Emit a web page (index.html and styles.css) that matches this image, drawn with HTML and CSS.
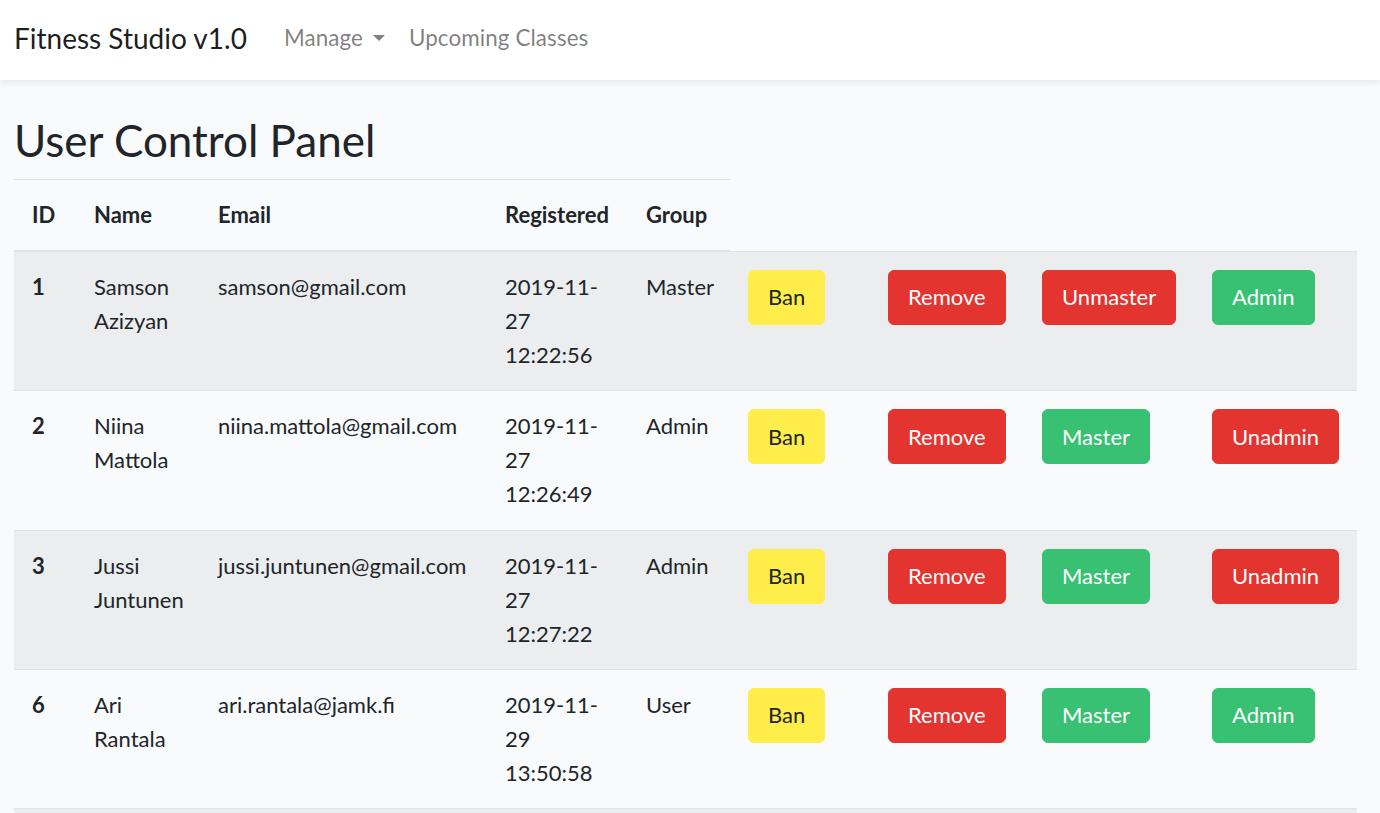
FILE: index.html
```html
<!DOCTYPE html>
<html lang="en">
<head>
<meta charset="utf-8">
<title>Fitness Studio v1.0</title>
<link rel="stylesheet" href="styles.css">
</head>
<body>
<nav class="navbar">
  <a class="brand" href="#">Fitness Studio v1.0</a>
  <ul class="nav">
    <li><a class="nav-link dropdown" href="#">Manage<span class="caret"></span></a></li>
    <li><a class="nav-link" href="#">Upcoming Classes</a></li>
  </ul>
</nav>
<main class="content">
  <h2 class="title">User Control Panel</h2>
  <table class="users">
    <colgroup>
      <col class="c-id"><col class="c-name"><col class="c-email"><col class="c-reg"><col class="c-group">
      <col class="c-ban"><col class="c-remove"><col class="c-master"><col class="c-admin">
    </colgroup>
    <thead>
      <tr><th>ID</th><th>Name</th><th>Email</th><th>Registered</th><th>Group</th></tr>
    </thead>
    <tbody>
      <tr class="odd">
        <th>1</th><td>Samson Azizyan</td><td>samson@gmail.com</td><td>2019-11-27 12:22:56</td><td>Master</td>
        <td><button class="btn btn-warning">Ban</button></td>
        <td><button class="btn btn-danger">Remove</button></td>
        <td><button class="btn btn-danger">Unmaster</button></td>
        <td><button class="btn btn-success">Admin</button></td>
      </tr>
      <tr>
        <th>2</th><td>Niina Mattola</td><td>niina.mattola@gmail.com</td><td>2019-11-27 12:26:49</td><td>Admin</td>
        <td><button class="btn btn-warning">Ban</button></td>
        <td><button class="btn btn-danger">Remove</button></td>
        <td><button class="btn btn-success">Master</button></td>
        <td><button class="btn btn-danger">Unadmin</button></td>
      </tr>
      <tr class="odd">
        <th>3</th><td>Jussi Juntunen</td><td>jussi.juntunen@gmail.com</td><td>2019-11-27 12:27:22</td><td>Admin</td>
        <td><button class="btn btn-warning">Ban</button></td>
        <td><button class="btn btn-danger">Remove</button></td>
        <td><button class="btn btn-success">Master</button></td>
        <td><button class="btn btn-danger">Unadmin</button></td>
      </tr>
      <tr>
        <th>6</th><td>Ari Rantala</td><td>ari.rantala@jamk.fi</td><td>2019-11-29 13:50:58</td><td>User</td>
        <td><button class="btn btn-warning">Ban</button></td>
        <td><button class="btn btn-danger">Remove</button></td>
        <td><button class="btn btn-success">Master</button></td>
        <td><button class="btn btn-success">Admin</button></td>
      </tr>
      <tr class="odd empty">
        <th></th><td></td><td></td><td></td><td></td>
        <td></td><td></td><td></td><td></td>
      </tr>
    </tbody>
  </table>
</main>
</body>
</html>
```

FILE: styles.css
```css
* { box-sizing: border-box; }

html, body {
  margin: 0;
  padding: 0;
}

body {
  background: #f8fafc;
  color: #212529;
  font-family: Lato, "Noto Sans", "Liberation Sans", sans-serif;
  font-size: 22px;
  line-height: 34.1px;
}

.navbar {
  display: flex;
  align-items: center;
  height: 80px;
  padding: 0 14px 4px 14px;
  background: #fff;
  box-shadow: 0 3px 6px rgba(0, 0, 0, 0.075);
  position: relative;
}

.brand {
  font-size: 28px;
  color: rgba(0, 0, 0, 0.9);
  text-decoration: none;
  margin-right: 25px;
  line-height: 40px;
}

.nav {
  display: flex;
  list-style: none;
  margin: 0;
  padding: 0;
}

.nav-link {
  display: flex;
  align-items: center;
  padding: 12px 12px;
  font-size: 22.4px;
  letter-spacing: 0.1px;
  color: rgba(0, 0, 0, 0.5);
  text-decoration: none;
}

.caret {
  display: inline-block;
  margin-left: 10px;
  width: 0;
  height: 0;
  border-top: 6px solid rgba(0, 0, 0, 0.5);
  border-left: 6px solid transparent;
  border-right: 6px solid transparent;
}

.content {
  padding: 34px 14px 0 14px;
}

.title {
  margin: 0 0 13px 0;
  font-size: 44px;
  font-weight: 400;
  line-height: 52px;
}

.users {
  border-collapse: collapse;
  table-layout: fixed;
  width: 1343px;
}

.c-id { width: 62px; }
.c-name { width: 124px; }
.c-email { width: 287px; }
.c-reg { width: 141px; }
.c-group { width: 102px; }
.c-ban { width: 140px; }
.c-remove { width: 154px; }
.c-master { width: 170px; }
.c-admin { width: 163px; }

.users th,
.users td {
  padding: 18px;
  text-align: left;
  vertical-align: top;
  border-top: 1px solid #dee2e6;
}

.users thead th {
  font-weight: 700;
  line-height: 34px;
  border-bottom: 2px solid #dee2e6;
}

.users tbody th {
  font-weight: 700;
}

.users tbody tr.odd {
  background: rgba(0, 0, 0, 0.05);
}

.users tr.empty th,
.users tr.empty td {
  height: 70px;
}

.btn {
  font-family: inherit;
  font-size: 22px;
  line-height: 34px;
  padding: 9.5px 19px;
  border: 1px solid transparent;
  border-radius: 6px;
  cursor: pointer;
  white-space: nowrap;
}

.btn-warning {
  background: #ffed4a;
  border-color: #ffed4a;
  color: #212529;
}

.btn-danger {
  background: #e3342f;
  border-color: #e3342f;
  color: #fff;
}

.btn-success {
  background: #38c172;
  border-color: #38c172;
  color: #fff;
}
```
